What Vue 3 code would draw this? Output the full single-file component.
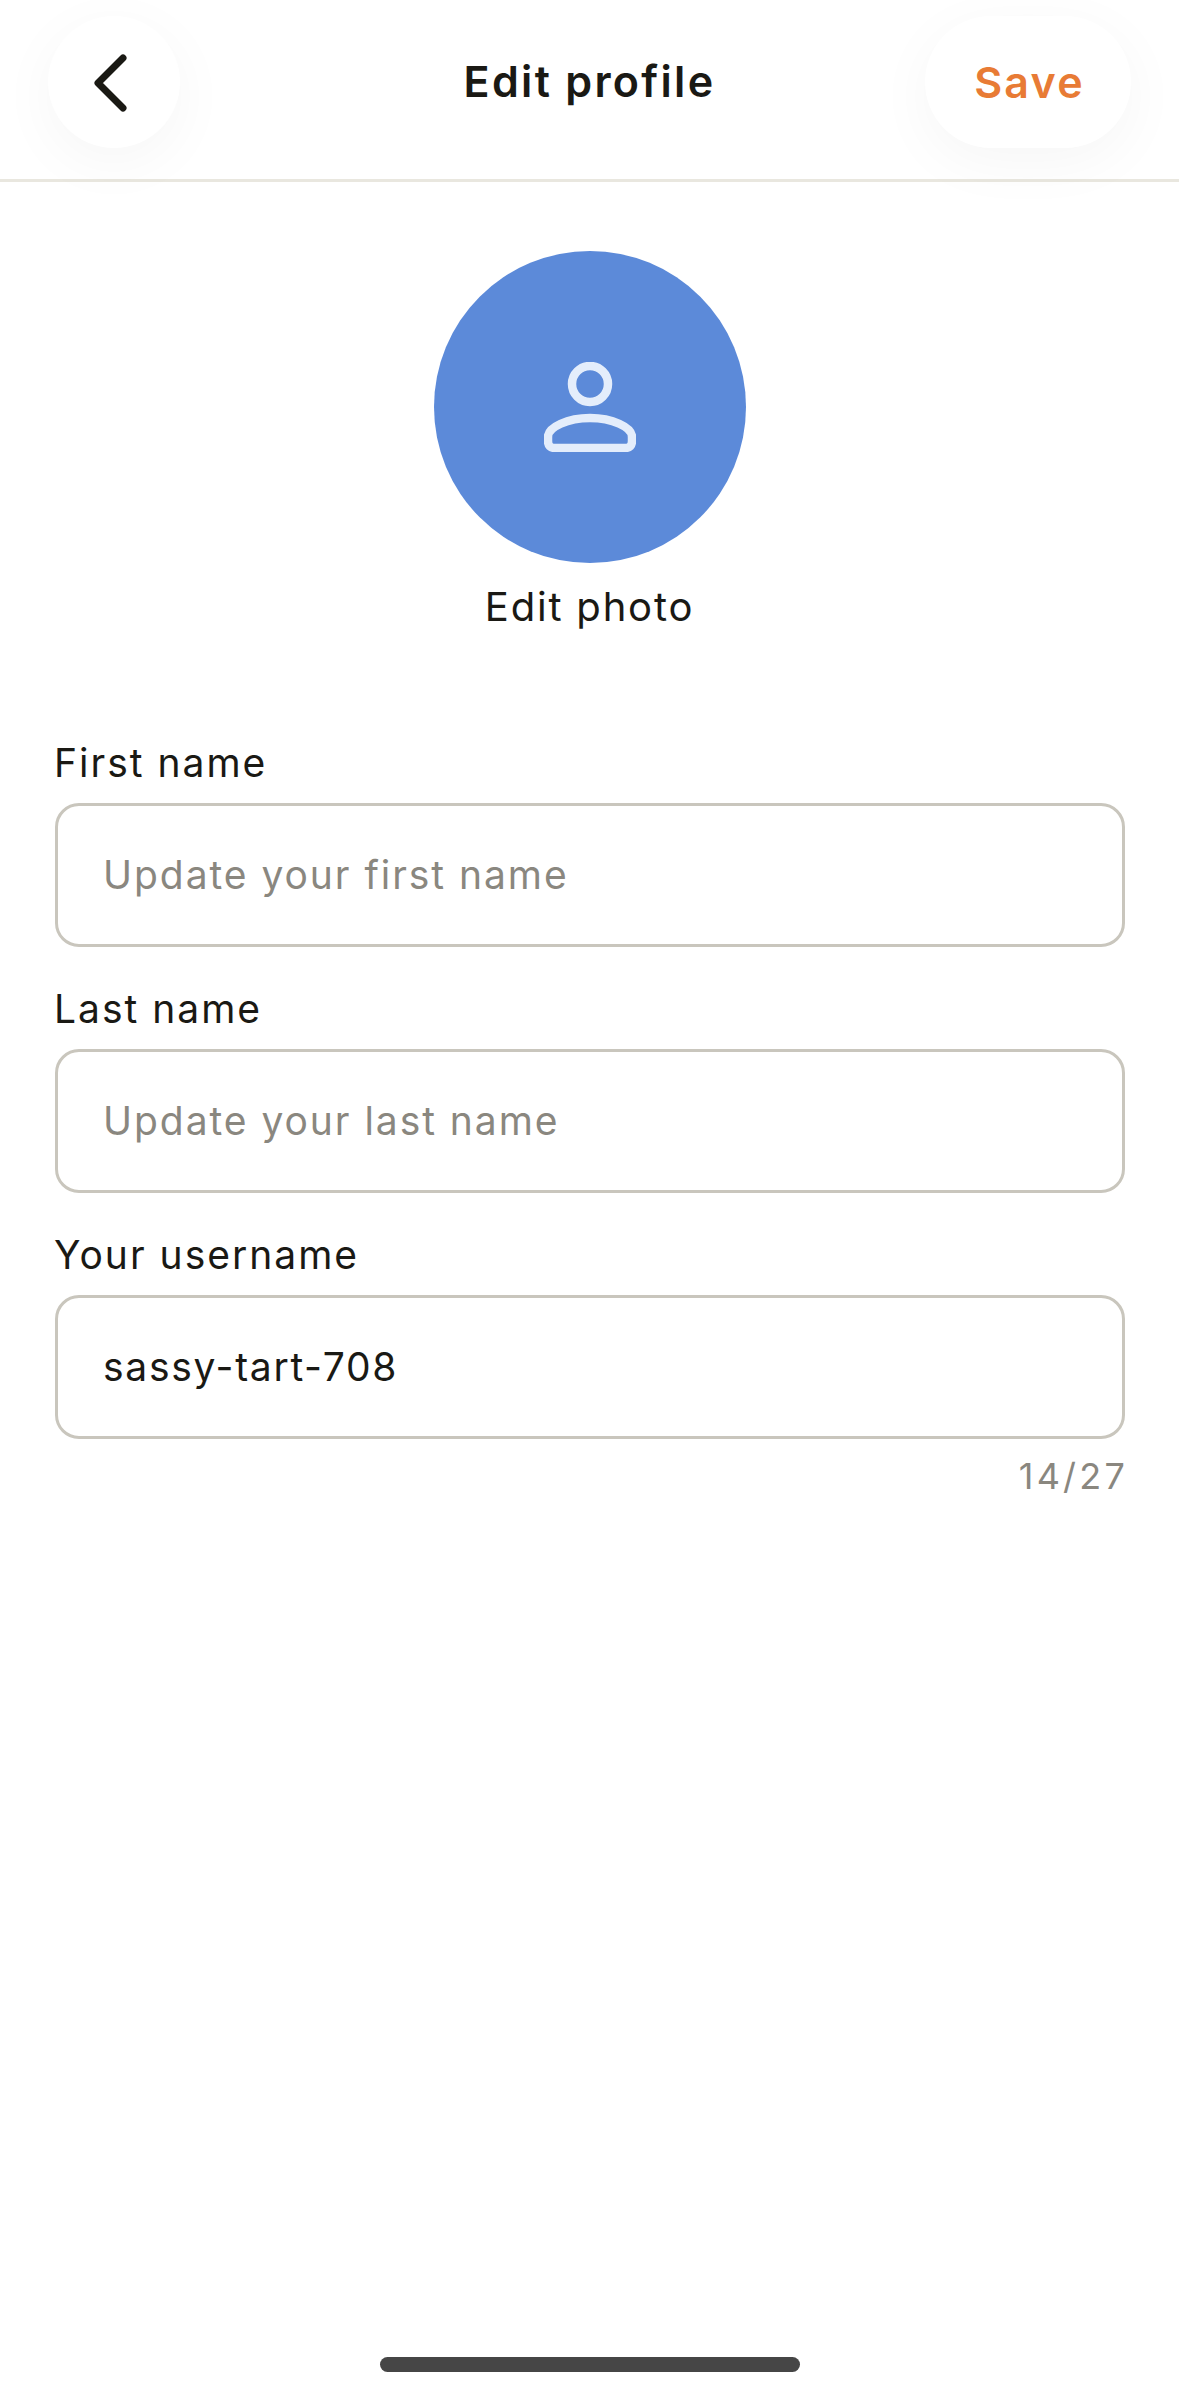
<template>
  <div class="page">
    <header class="top-bar">
      <button class="round-btn back-btn" aria-label="Back">
        <svg viewBox="0 0 40 62" width="40" height="62" fill="none" stroke="currentColor" stroke-width="7" stroke-linecap="round" stroke-linejoin="round">
          <path d="M33 7 L8 32 L33 57" />
        </svg>
      </button>
      <h1 class="title">Edit profile</h1>
      <button class="round-btn save-btn">Save</button>
    </header>

    <section class="photo">
      <div class="avatar">
        <svg viewBox="0 0 92 90" width="92" height="90" fill="none" stroke="#e4edfb" stroke-width="8.5" stroke-linejoin="round">
          <circle cx="46" cy="22" r="18" />
          <path d="M4 75 C4 65 24 56 46 56 C68 56 88 65 88 75 L88 79 Q88 86 81 86 L11 86 Q4 86 4 79 Z" />
        </svg>
      </div>
      <div class="photo-label">Edit photo</div>
    </section>

    <form class="form" @submit.prevent>
      <div v-for="field in fields" :key="field.label" class="field">
        <label class="field-label">{{ field.label }}</label>
        <input v-model="field.value" class="field-input" type="text" :placeholder="field.placeholder" />
        <div v-if="field.max" class="counter">{{ field.value.length }}/{{ field.max }}</div>
      </div>
    </form>

    <div class="home-bar"></div>
  </div>
</template>

<script setup>
import { reactive } from 'vue'

const fields = reactive([
  { label: 'First name', placeholder: 'Update your first name', value: '' },
  { label: 'Last name', placeholder: 'Update your last name', value: '' },
  { label: 'Your username', placeholder: '', value: 'sassy-tart-708', max: 27 }
])
</script>

<style>
html,
body {
  margin: 0;
  background: #fff;
}
</style>

<style scoped>
.page {
  position: relative;
  width: 1179px;
  height: 2396px;
  overflow: hidden;
  background: #fff;
  color: #1a1914;
  font-family: Inter, "Liberation Sans", sans-serif;
}

.top-bar {
  display: grid;
  grid-template-columns: 1fr auto 1fr;
  align-items: center;
  box-sizing: border-box;
  height: 182px;
  padding: 0 48px 16px 48px;
  border-bottom: 3px solid #e9e7df;
}

.round-btn {
  height: 132px;
  border: none;
  border-radius: 66px;
  background: #fff;
  box-shadow: 0 14px 60px rgba(0, 0, 0, 0.04);
  display: flex;
  align-items: center;
  justify-content: center;
  padding: 0;
  font-family: inherit;
}

.back-btn {
  justify-self: start;
  width: 132px;
  color: #1a1914;
  padding-right: 8px;
}

.save-btn {
  justify-self: end;
  width: 206px;
  padding-left: 3px;
  color: #e87b35;
  font-size: 43px;
  font-weight: 600;
  letter-spacing: 2.2px;
}

.title {
  margin: 0;
  font-size: 43px;
  font-weight: 600;
  line-height: 1;
  letter-spacing: 2.3px;
}

.photo {
  display: flex;
  flex-direction: column;
  align-items: center;
  padding-top: 69px;
}

.avatar {
  width: 312px;
  height: 312px;
  border-radius: 50%;
  background: #5c8ad9;
  display: flex;
  align-items: center;
  justify-content: center;
}

.photo-label {
  margin-top: 20px;
  font-size: 40px;
  line-height: 48px;
  letter-spacing: 1.8px;
}

.form {
  display: flex;
  flex-direction: column;
  gap: 38px;
  padding: 108px 54px 0 55px;
}

.field {
  display: flex;
  flex-direction: column;
}

.field-label {
  margin: 0 0 16px -1px;
  font-size: 39px;
  line-height: 48px;
  letter-spacing: 2px;
}

.field-input {
  box-sizing: border-box;
  width: 100%;
  height: 144px;
  padding: 0 45px 2px;
  border: 3px solid #c9c6bd;
  border-radius: 24px;
  outline: none;
  background: #fff;
  color: #1a1914;
  font-family: inherit;
  font-size: 39px;
  letter-spacing: 1.7px;
}

.field-input::placeholder {
  color: #8a877f;
  opacity: 1;
  letter-spacing: 1.95px;
}

.counter {
  margin: 15px -3px 0 0;
  text-align: right;
  color: #8a877f;
  font-size: 36px;
  line-height: 44px;
  letter-spacing: 3.2px;
}

.home-bar {
  position: absolute;
  left: 380px;
  top: 2357px;
  width: 420px;
  height: 15px;
  border-radius: 8px;
  background: #464646;
}
</style>
